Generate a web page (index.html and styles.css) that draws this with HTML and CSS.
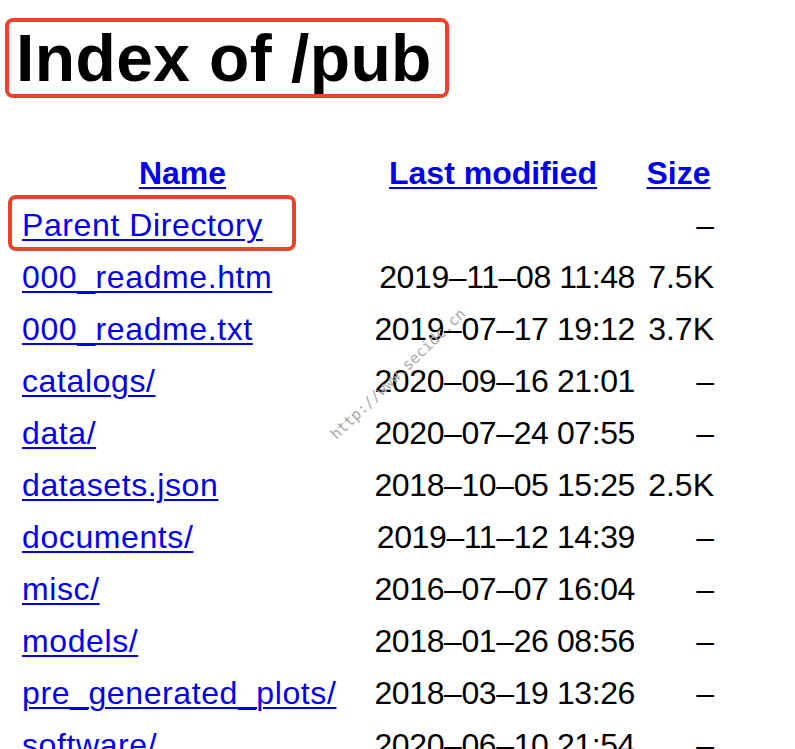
FILE: index.html
```html
<!DOCTYPE html>
<html>
<head>
<meta charset="utf-8">
<title>Index of /pub</title>
<link rel="stylesheet" href="styles.css">
</head>
<body>
<h1 class="title">Index of /pub</h1>
<table class="listing">
<tr><th class="h-name"><a href="#">Name</a></th><th class="h-date"><a href="#">Last modified</a></th><th class="h-size"><a href="#">Size</a></th></tr>
<tr><td><a href="#">Parent Directory</a></td><td class="r"></td><td class="r">–</td></tr>
<tr><td><a href="#">000_readme.htm</a></td><td class="r d">2019–11–08 11:48</td><td class="r">7.5K</td></tr>
<tr><td><a href="#">000_readme.txt</a></td><td class="r d">2019–07–17 19:12</td><td class="r">3.7K</td></tr>
<tr><td><a href="#">catalogs/</a></td><td class="r d">2020–09–16 21:01</td><td class="r">–</td></tr>
<tr><td><a href="#">data/</a></td><td class="r d">2020–07–24 07:55</td><td class="r">–</td></tr>
<tr><td><a href="#">datasets.json</a></td><td class="r d">2018–10–05 15:25</td><td class="r">2.5K</td></tr>
<tr><td><a href="#">documents/</a></td><td class="r d">2019–11–12 14:39</td><td class="r">–</td></tr>
<tr><td><a href="#">misc/</a></td><td class="r d">2016–07–07 16:04</td><td class="r">–</td></tr>
<tr><td><a href="#">models/</a></td><td class="r d">2018–01–26 08:56</td><td class="r">–</td></tr>
<tr><td><a href="#">pre_generated_plots/</a></td><td class="r d">2018–03–19 13:26</td><td class="r">–</td></tr>
<tr><td><a href="#">software/</a></td><td class="r d">2020–06–10 21:54</td><td class="r">–</td></tr>
</table>
<div class="mark mark-title"></div>
<div class="mark mark-parent"></div>
<div class="watermark">http://www.secidc.cn</div>
</body>
</html>
```
FILE: styles.css
```css
html, body {
  background: #fff;
}
body {
  margin: 16px;
  font-family: "Liberation Sans", Arial, sans-serif;
  font-size: 32px;
  color: #000;
}
.title {
  font-size: 66px;
  font-weight: bold;
  line-height: 80px;
  margin: 2px 0 47px 0;
  letter-spacing: 0.4px;
}
.listing {
  border-collapse: separate;
  border-spacing: 4px;
}
.h-name { width: 321px; }
.h-date { width: 284px; }
.h-size { width: 71px; }
.listing th, .listing td {
  padding: 2px;
  line-height: 44px;
  white-space: nowrap;
  vertical-align: top;
}
.listing th {
  text-align: center;
  font-weight: bold;
}
.listing td.r {
  text-align: right;
}
.listing td.d {
  letter-spacing: -0.4px;
}
.listing td a {
  letter-spacing: 0.6px;
}
a {
  color: #0000ee;
  text-decoration: underline;
  text-decoration-thickness: 2px;
  text-underline-offset: 3px;
}
.mark {
  position: absolute;
  border: 4px solid #e9442b;
  border-radius: 8px;
  box-sizing: border-box;
}
.mark-title {
  left: 5px;
  top: 18px;
  width: 444px;
  height: 80px;
}
.mark-parent {
  left: 8px;
  top: 195px;
  width: 288px;
  height: 56px;
}
.watermark {
  position: absolute;
  left: 300px;
  top: 365px;
  width: 196px;
  text-align: center;
  font-family: "DejaVu Sans Mono", monospace;
  font-size: 15px;
  line-height: 18px;
  color: #a8a8a8;
  transform: rotate(-44deg);
}
```
